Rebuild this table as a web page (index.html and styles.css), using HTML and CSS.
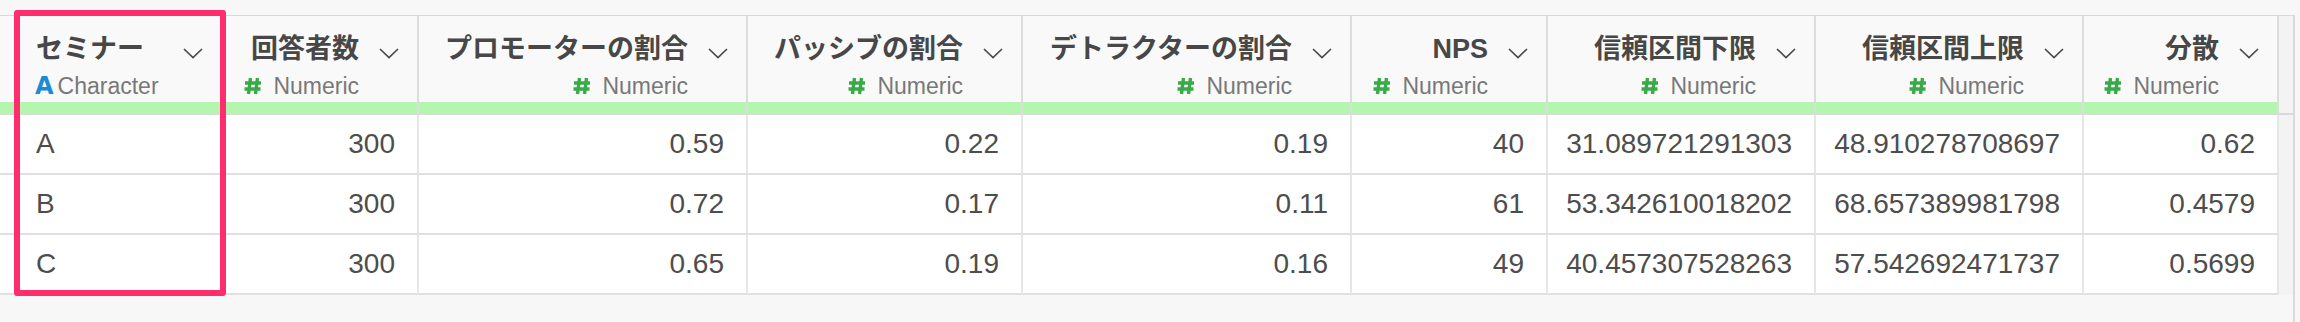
FILE: index.html
```html
<!DOCTYPE html>
<html lang="ja">
<head>
<meta charset="utf-8">
<title>NPS table</title>
<link rel="stylesheet" href="styles.css">
</head>
<body>
<div class="frame">
  <div class="sheet">
    <div class="table">
      <div class="hcell chr">
        <div class="hmain">
          <div class="labels">
            <div class="title">セミナー</div>
            <div class="type"><span class="ico-a">A</span><span>Character</span></div>
          </div>
          <svg class="chev" viewBox="0 0 20 11" width="20" height="11"><polyline points="1,1 10,9.5 19,1"/></svg>
        </div>
        <div class="bar"></div>
      </div>
      <div class="hcell">
        <div class="hmain">
          <div class="labels">
            <div class="title">回答者数</div>
            <div class="type"><svg class="ico-h" viewBox="0 0 18 18" width="18" height="18"><path d="M6.5 1 L4.5 17 M13.5 1 L11.5 17 M1 6 H17 M0.5 12 H16.5"/></svg><span>Numeric</span></div>
          </div>
          <svg class="chev" viewBox="0 0 20 11" width="20" height="11"><polyline points="1,1 10,9.5 19,1"/></svg>
        </div>
        <div class="bar"></div>
      </div>
      <div class="hcell">
        <div class="hmain">
          <div class="labels">
            <div class="title">プロモーターの割合</div>
            <div class="type"><svg class="ico-h" viewBox="0 0 18 18" width="18" height="18"><path d="M6.5 1 L4.5 17 M13.5 1 L11.5 17 M1 6 H17 M0.5 12 H16.5"/></svg><span>Numeric</span></div>
          </div>
          <svg class="chev" viewBox="0 0 20 11" width="20" height="11"><polyline points="1,1 10,9.5 19,1"/></svg>
        </div>
        <div class="bar"></div>
      </div>
      <div class="hcell">
        <div class="hmain">
          <div class="labels">
            <div class="title">パッシブの割合</div>
            <div class="type"><svg class="ico-h" viewBox="0 0 18 18" width="18" height="18"><path d="M6.5 1 L4.5 17 M13.5 1 L11.5 17 M1 6 H17 M0.5 12 H16.5"/></svg><span>Numeric</span></div>
          </div>
          <svg class="chev" viewBox="0 0 20 11" width="20" height="11"><polyline points="1,1 10,9.5 19,1"/></svg>
        </div>
        <div class="bar"></div>
      </div>
      <div class="hcell">
        <div class="hmain">
          <div class="labels">
            <div class="title">デトラクターの割合</div>
            <div class="type"><svg class="ico-h" viewBox="0 0 18 18" width="18" height="18"><path d="M6.5 1 L4.5 17 M13.5 1 L11.5 17 M1 6 H17 M0.5 12 H16.5"/></svg><span>Numeric</span></div>
          </div>
          <svg class="chev" viewBox="0 0 20 11" width="20" height="11"><polyline points="1,1 10,9.5 19,1"/></svg>
        </div>
        <div class="bar"></div>
      </div>
      <div class="hcell">
        <div class="hmain">
          <div class="labels">
            <div class="title">NPS</div>
            <div class="type"><svg class="ico-h" viewBox="0 0 18 18" width="18" height="18"><path d="M6.5 1 L4.5 17 M13.5 1 L11.5 17 M1 6 H17 M0.5 12 H16.5"/></svg><span>Numeric</span></div>
          </div>
          <svg class="chev" viewBox="0 0 20 11" width="20" height="11"><polyline points="1,1 10,9.5 19,1"/></svg>
        </div>
        <div class="bar"></div>
      </div>
      <div class="hcell">
        <div class="hmain">
          <div class="labels">
            <div class="title">信頼区間下限</div>
            <div class="type"><svg class="ico-h" viewBox="0 0 18 18" width="18" height="18"><path d="M6.5 1 L4.5 17 M13.5 1 L11.5 17 M1 6 H17 M0.5 12 H16.5"/></svg><span>Numeric</span></div>
          </div>
          <svg class="chev" viewBox="0 0 20 11" width="20" height="11"><polyline points="1,1 10,9.5 19,1"/></svg>
        </div>
        <div class="bar"></div>
      </div>
      <div class="hcell">
        <div class="hmain">
          <div class="labels">
            <div class="title">信頼区間上限</div>
            <div class="type"><svg class="ico-h" viewBox="0 0 18 18" width="18" height="18"><path d="M6.5 1 L4.5 17 M13.5 1 L11.5 17 M1 6 H17 M0.5 12 H16.5"/></svg><span>Numeric</span></div>
          </div>
          <svg class="chev" viewBox="0 0 20 11" width="20" height="11"><polyline points="1,1 10,9.5 19,1"/></svg>
        </div>
        <div class="bar"></div>
      </div>
      <div class="hcell">
        <div class="hmain">
          <div class="labels">
            <div class="title">分散</div>
            <div class="type"><svg class="ico-h" viewBox="0 0 18 18" width="18" height="18"><path d="M6.5 1 L4.5 17 M13.5 1 L11.5 17 M1 6 H17 M0.5 12 H16.5"/></svg><span>Numeric</span></div>
          </div>
          <svg class="chev" viewBox="0 0 20 11" width="20" height="11"><polyline points="1,1 10,9.5 19,1"/></svg>
        </div>
        <div class="bar"></div>
      </div>
      <div class="hfill"></div>

      <div class="cell chr">A</div>
      <div class="cell">300</div>
      <div class="cell">0.59</div>
      <div class="cell">0.22</div>
      <div class="cell">0.19</div>
      <div class="cell">40</div>
      <div class="cell">31.089721291303</div>
      <div class="cell">48.910278708697</div>
      <div class="cell">0.62</div>
      <div class="fill"></div>

      <div class="cell chr">B</div>
      <div class="cell">300</div>
      <div class="cell">0.72</div>
      <div class="cell">0.17</div>
      <div class="cell">0.11</div>
      <div class="cell">61</div>
      <div class="cell">53.342610018202</div>
      <div class="cell">68.657389981798</div>
      <div class="cell">0.4579</div>
      <div class="fill"></div>

      <div class="cell chr">C</div>
      <div class="cell">300</div>
      <div class="cell">0.65</div>
      <div class="cell">0.19</div>
      <div class="cell">0.16</div>
      <div class="cell">49</div>
      <div class="cell">40.457307528263</div>
      <div class="cell">57.542692471737</div>
      <div class="cell">0.5699</div>
      <div class="fill"></div>
    </div>
  </div>
</div>
<div class="highlight"></div>
</body>
</html>
```

FILE: styles.css
```css
html, body {
  margin: 0;
  padding: 0;
}

body {
  width: 2300px;
  height: 322px;
  overflow: hidden;
  background: #f7f7f7;
  font-family: "Liberation Sans", "Noto Sans CJK JP", sans-serif;
  color: #4a4a4a;
  position: relative;
}

.frame {
  display: flex;
  height: 322px;
  padding-top: 15px;
  box-sizing: border-box;
}

.sheet {
  width: 2293px;
  border-top: 1px solid #dadada;
  border-right: 2px solid #dadada;
}

.table {
  display: grid;
  grid-template-columns: 223px 196px 329px 275px 329px 196px 268px 268px 195px 14px;
}

.hcell {
  display: flex;
  flex-direction: column;
  background: #f9f9f9;
  border-right: 2px solid #dcdcdc;
  border-bottom: 2px solid #d9d9d9;
}

.hmain {
  height: 86px;
  box-sizing: border-box;
  padding: 16px 18px 0 21px;
  display: flex;
  justify-content: flex-end;
  align-items: flex-start;
  gap: 20px;
}

.hcell.chr .hmain {
  justify-content: space-between;
  padding-left: 36px;
}

.labels {
  display: flex;
  flex-direction: column;
  align-items: flex-end;
  white-space: nowrap;
}

.hcell.chr .labels {
  align-items: flex-start;
}

.title {
  font-size: 27px;
  line-height: 34px;
  font-weight: bold;
  color: #474747;
}

.type {
  display: flex;
  align-items: center;
  margin-top: 5px;
  height: 30px;
  font-size: 23px;
  color: #787878;
}

.ico-h {
  flex: none;
  fill: none;
  stroke: #3aaa48;
  stroke-width: 3.4;
  margin-right: 11px;
}

.ico-a {
  font-family: "DejaVu Sans", sans-serif;
  font-weight: bold;
  font-size: 24px;
  color: #1b8bd6;
  margin-left: -1px;
  margin-right: 4px;
}

.chev {
  flex: none;
  margin-top: 16px;
  fill: none;
  stroke: #4a4a4a;
  stroke-width: 1.7;
}

.bar {
  height: 11px;
  background: #b4f5b0;
}

.hfill {
  background: #f3f3f3;
  border-bottom: 2px solid #d9d9d9;
}

.cell {
  height: 60px;
  box-sizing: border-box;
  display: flex;
  align-items: center;
  justify-content: flex-end;
  padding: 0 22px 0 21px;
  background: #fff;
  border-right: 2px solid #e6e6e6;
  border-bottom: 2px solid #e0e0e0;
  font-size: 28px;
  color: #4d4d4d;
  white-space: nowrap;
}

.cell.chr {
  justify-content: flex-start;
  padding-left: 36px;
}

.fill {
  background: #f3f3f3;
}

.highlight {
  position: absolute;
  left: 14px;
  top: 10px;
  width: 212px;
  height: 286px;
  box-sizing: border-box;
  border: 6px solid #fe2e6c;
  border-radius: 3px;
}
```
